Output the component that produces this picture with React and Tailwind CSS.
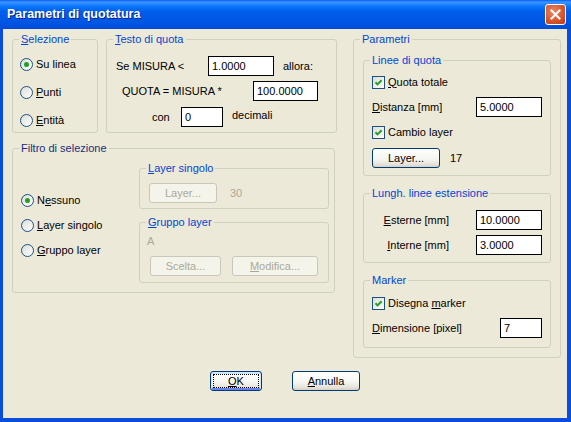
import React from 'react';

// Finestra di dialogo stile Windows XP
function Group({ legend, legendClass = 'text-[#0046D5]', className = '', children }) {
  return (
    <fieldset className={`border border-[#D0D0BF] rounded-[3px] ${className}`}>
      <legend className={`ml-[6px] px-[2px] leading-[14px] ${legendClass}`}>{legend}</legend>
      {children}
    </fieldset>
  );
}

function Radio({ checked, children }) {
  return (
    <div className="flex items-center gap-[3px]">
      <span className="w-[13px] h-[13px] rounded-full border border-[#1C5180] bg-[linear-gradient(135deg,#DCDCD7,#FFFFFF)] flex items-center justify-center">
        {checked && <span className="w-[5px] h-[5px] rounded-full bg-[#21A121]" />}
      </span>
      <span className="leading-[13px]">{children}</span>
    </div>
  );
}

function Check({ children }) {
  return (
    <div className="flex items-center gap-[3px]">
      <span className="w-[13px] h-[13px] border border-[#1C5180] bg-[linear-gradient(135deg,#DCDCD7,#FFFFFF)] flex items-center justify-center">
        <svg width="11" height="11" viewBox="0 0 11 11">
          <path d="M2.5 5.3 L4.5 7.4 L8.6 3.2" fill="none" stroke="#21A121" strokeWidth="2" />
        </svg>
      </span>
      <span className="leading-[13px]">{children}</span>
    </div>
  );
}

function Field({ value, className = '' }) {
  return (
    <input
      readOnly
      value={value}
      className={`h-[20px] border border-black bg-white pl-[3px] text-[11px] leading-[13px] outline-none ${className}`}
    />
  );
}

function Btn({ children, className = '', disabled, def }) {
  if (disabled) {
    return (
      <div className={`h-[20px] rounded-[3px] border border-[#C9C7BA] bg-[#F5F4EA] text-[#ACA899] flex items-center justify-center ${className}`}>
        {children}
      </div>
    );
  }
  return (
    <div
      className={`h-[20px] rounded-[3px] border border-[#003C74] bg-[linear-gradient(180deg,#FFFFFF_0%,#F6F6F2_55%,#E6E3D9_85%,#D6D0C5_100%)] flex items-center justify-center ${
        def ? 'shadow-[inset_0_1px_0_1px_#CEE7FF,inset_0_-1px_0_1px_#6982EE] outline-1 outline-dotted outline-black -outline-offset-4' : ''
      } ${className}`}
    >
      {children}
    </div>
  );
}

export default function App() {
  return (
    <div className="w-[571px] h-[422px] flex flex-col bg-[#0A4CDB] font-['Liberation_Sans',Arial,sans-serif] text-[11px] text-black select-none">
      {/* barra del titolo */}
      <div className="h-[29px] flex items-center justify-between pl-[7px] pr-[5px] bg-[linear-gradient(180deg,#0A5DEE_0%,#3D95FF_7%,#2288FF_14%,#0A72FA_24%,#005FEA_40%,#0055E3_80%,#004BD8_100%)]">
        <span className="text-white font-bold text-[12.5px] [text-shadow:1px_1px_0_#0A1E8A]">Parametri di quotatura</span>
        <div className="w-[21px] h-[21px] rounded-[3px] border border-white bg-[radial-gradient(circle_at_40%_35%,#E8896A,#D9572E_55%,#B83A14)] flex items-center justify-center">
          <svg width="11" height="11" viewBox="0 0 11 11">
            <path d="M1.5 1.5 L9.5 9.5 M9.5 1.5 L1.5 9.5" stroke="white" strokeWidth="2" strokeLinecap="square" />
          </svg>
        </div>
      </div>

      <div className="flex-1 ml-[3px] mr-[4px] mb-[4px] bg-[#ECE9D8] flex flex-col">
        <div className="flex ml-[9px] mt-[3px]">
          {/* colonna sinistra */}
          <div className="w-[325px] flex flex-col">
            <div className="flex gap-[8px]">
              <Group legend={<><span className="underline">S</span>elezione</>} className="w-[86px] h-[101px]">
                <div className="pl-[7px] pt-[4px] flex flex-col">
                  <div className="h-[28px] flex items-center"><Radio checked>Su linea</Radio></div>
                  <div className="h-[28px] flex items-center"><Radio><span className="underline">P</span>unti</Radio></div>
                  <div className="h-[28px] flex items-center"><Radio><span className="underline">E</span>ntità</Radio></div>
                </div>
              </Group>
              <Group legend={<><span className="underline">T</span>esto di quota</>} className="w-[231px] h-[101px]">
                <div className="pl-[9px] flex flex-col">
                  <div className="mt-[10px] h-[20px] flex items-center">
                    <span className="w-[92px]">Se MISURA &lt;</span>
                    <Field value="1.0000" className="w-[66px]" />
                    <span className="ml-[9px]">allora:</span>
                  </div>
                  <div className="mt-[5px] h-[20px] flex items-center ml-[6px]">
                    <span className="w-[131px]">QUOTA = MISURA *</span>
                    <Field value="100.0000" className="w-[65px]" />
                  </div>
                  <div className="mt-[6px] h-[20px] flex items-center ml-[36px]">
                    <span className="w-[29px]">con</span>
                    <Field value="0" className="w-[42px]" />
                    <span className="ml-[9px] -mt-[3px]">decimali</span>
                  </div>
                </div>
              </Group>
            </div>

            <Group legend="Filtro di selezione" legendClass="text-[#16307A]" className="mt-[8px] w-[323px] h-[152px]">
              <div className="flex">
                <div className="w-[126px] pl-[8px] pt-[33px] flex flex-col">
                  <div className="h-[25px] flex items-center"><Radio checked>N<span className="underline">e</span>ssuno</Radio></div>
                  <div className="h-[25px] flex items-center"><Radio><span className="underline">L</span>ayer singolo</Radio></div>
                  <div className="h-[25px] flex items-center"><Radio><span className="underline">G</span>ruppo layer</Radio></div>
                </div>
                <div className="w-[190px] pt-[6px] flex flex-col gap-[6px]">
                  <Group legend={<><span className="underline">L</span>ayer singolo</>} className="h-[48px]">
                    <div className="pl-[9px] pt-[8px] flex items-center">
                      <Btn disabled className="w-[68px]">Layer...</Btn>
                      <span className="ml-[13px] text-[#ACA899]">30</span>
                    </div>
                  </Group>
                  <Group legend={<><span className="underline">G</span>ruppo layer</>} className="h-[68px]">
                    <div className="pl-[7px] flex flex-col">
                      <span className="mt-[6px] leading-[13px] text-[#ACA899]">A</span>
                      <div className="mt-[8px] ml-[3px] flex gap-[11px]">
                        <Btn disabled className="w-[71px]">Scelta...</Btn>
                        <Btn disabled className="w-[86px]"><span className="underline">M</span>odifica...</Btn>
                      </div>
                    </div>
                  </Group>
                </div>
              </div>
            </Group>
          </div>

          {/* colonna destra */}
          <Group legend="Parametri" className="ml-[16px] w-[208px] h-[326px]">
            <div className="pl-[9px] flex flex-col">
              <Group legend="Linee di quota" className="mt-[7px] w-[188px] h-[123px]">
                <div className="pl-[8px] flex flex-col">
                  <div className="mt-[5px] h-[20px] flex items-center">
                    <Check><span className="underline">Q</span>uota totale</Check>
                  </div>
                  <div className="mt-[5px] h-[20px] flex items-center">
                    <span className="w-[104px]"><span className="underline">D</span>istanza [mm]</span>
                    <Field value="5.0000" className="w-[66px]" />
                  </div>
                  <div className="mt-[5px] h-[20px] flex items-center">
                    <Check>Cambio layer</Check>
                  </div>
                  <div className="mt-[6px] h-[20px] flex items-center">
                    <Btn className="w-[68px]">Layer...</Btn>
                    <span className="ml-[10px]">17</span>
                  </div>
                </div>
              </Group>

              <Group legend="Lungh. linee estensione" className="mt-[10px] w-[188px] h-[77px]">
                <div className="pl-[8px] flex flex-col">
                  <div className="mt-[10px] h-[20px] flex items-center">
                    <span className="w-[77px] text-right"><span className="underline">E</span>sterne [mm]</span>
                    <Field value="10.0000" className="ml-[27px] w-[66px]" />
                  </div>
                  <div className="mt-[5px] h-[20px] flex items-center">
                    <span className="w-[77px] text-right"><span className="underline">I</span>nterne [mm]</span>
                    <Field value="3.0000" className="ml-[27px] w-[66px]" />
                  </div>
                </div>
              </Group>

              <Group legend="Marker" className="mt-[10px] w-[188px] h-[75px]">
                <div className="pl-[8px] flex flex-col">
                  <div className="mt-[6px] h-[20px] flex items-center">
                    <Check>Disegna <span className="underline">m</span>arker</Check>
                  </div>
                  <div className="mt-[5px] h-[20px] flex items-center">
                    <span className="w-[128px]"><span className="underline">D</span>imensione [pixel]</span>
                    <Field value="7" className="w-[42px]" />
                  </div>
                </div>
              </Group>
            </div>
          </Group>
        </div>

        {/* pulsanti */}
        <div className="mt-[13px] flex justify-center gap-[30px]">
          <Btn def className="w-[52px]"><span className="underline">O</span>K</Btn>
          <Btn className="w-[68px]"><span className="underline">A</span>nnulla</Btn>
        </div>
      </div>
    </div>
  );
}
